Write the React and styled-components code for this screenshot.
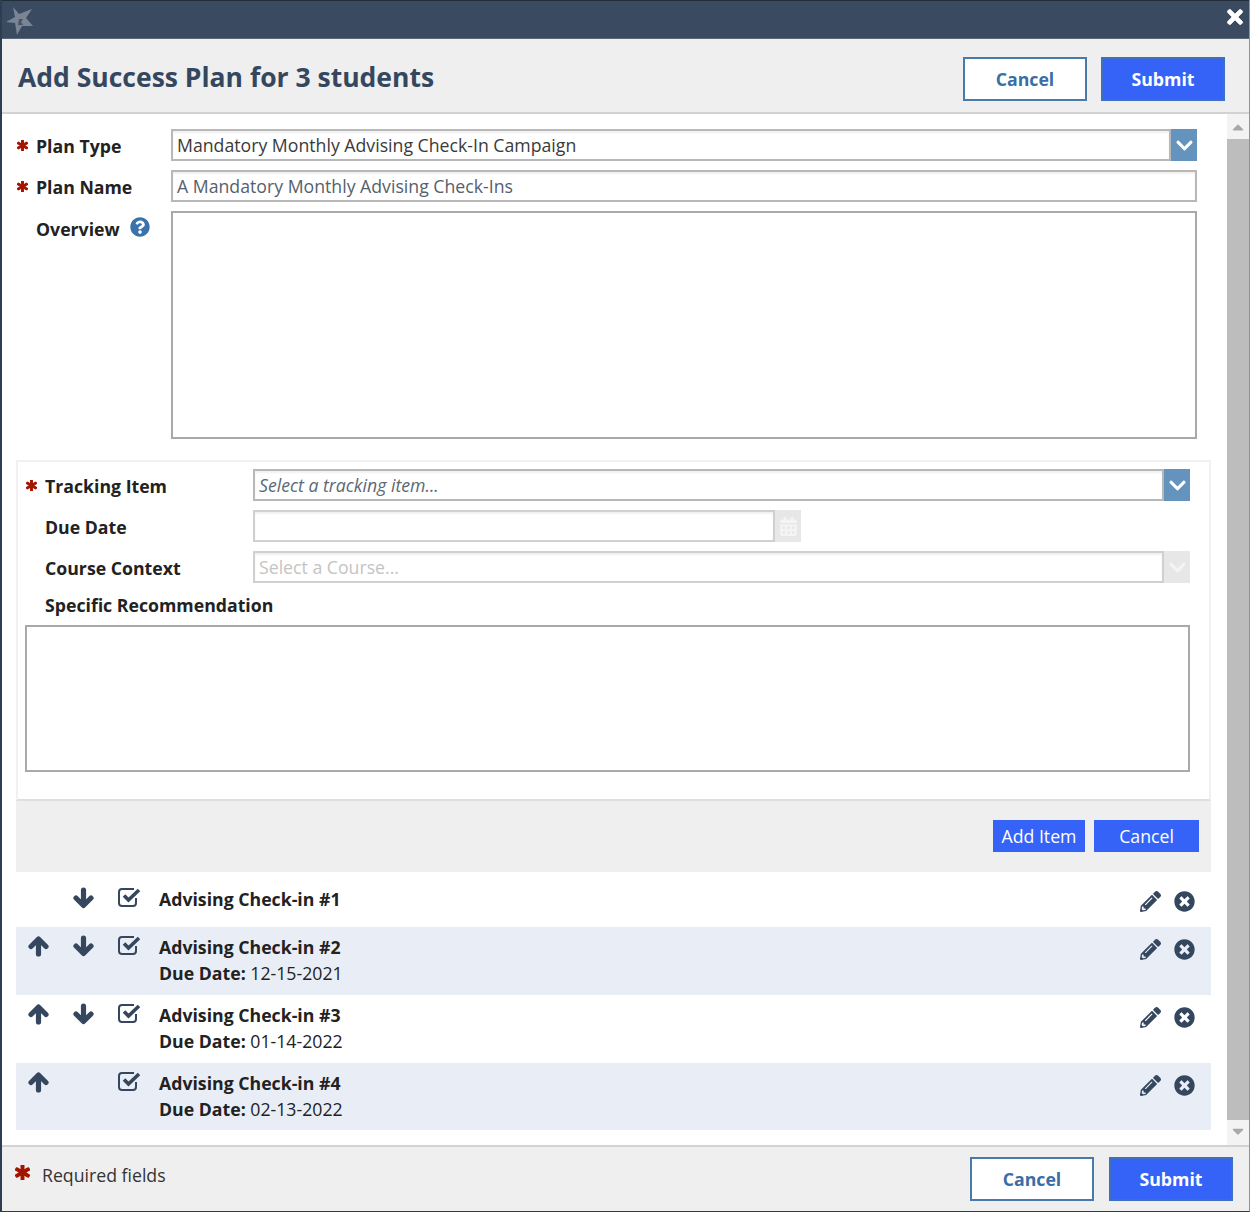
import React from 'react';
import styled, { createGlobalStyle } from 'styled-components';
import {
  FaPencilAlt,
  FaTimesCircle,
  FaChevronDown,
  FaQuestionCircle,
  FaTimes,
  FaAsterisk,
  FaCalendarAlt,
  FaCaretUp,
  FaCaretDown,
} from 'react-icons/fa';

const GlobalStyle = createGlobalStyle`
  html, body {
    margin: 0;
    padding: 0;
    background: #fff;
  }
  * {
    box-sizing: border-box;
  }
`;

const Dialog = styled.div`
  width: 1250px;
  height: 1212px;
  display: flex;
  flex-direction: column;
  overflow: hidden;
  border-left: 2px solid #2f3d50;
  border-right: 1px solid #8a93a0;
  border-bottom: 1px solid #2f3d50;
  font-family: 'Open Sans', sans-serif;
  font-size: 17.7px;
  color: #222;
`;

const TitleBar = styled.div`
  height: 39px;
  flex: none;
  margin: 0 -1px 0 -2px;
  padding: 5px 4px 0 5px;
  display: flex;
  justify-content: space-between;
  align-items: flex-start;
  background: #3a4a60;
  border-top: 1px solid #222c3a;
  border-bottom: 1px solid #5b6878;
`;

const CloseIcon = styled(FaTimes)`
  color: #fff;
  font-size: 22px;
  margin-top: 0;
  stroke: currentColor;
  stroke-width: 20px;
`;

const Header = styled.div`
  height: 75px;
  flex: none;
  padding: 6px 24px 0 16px;
  display: flex;
  justify-content: space-between;
  align-items: center;
  background: #efefef;
  border-bottom: 2px solid #d2d2d2;
`;

const Title = styled.h1`
  margin: 0 0 4px;
  font-size: 26.5px;
  font-weight: 700;
  color: #35475f;
`;

const Actions = styled.div`
  display: flex;
  gap: ${({ $gap }) => $gap}px;
`;

const OutlineButton = styled.button`
  width: 124px;
  height: 44px;
  padding: 0;
  background: #fff;
  border: 2px solid #4a7aaa;
  color: #3a6ea5;
  font-family: inherit;
  font-size: 17.7px;
  font-weight: 700;
`;

const SolidButton = styled(OutlineButton)`
  background: #3563f8;
  border-color: #3f6fc0;
  color: #fff;
`;

const Body = styled.div`
  flex: 1;
  min-height: 0;
  display: flex;
`;

const Content = styled.div`
  flex: 1;
  min-width: 0;
  padding: 15px 16px 0 14px;
`;

const Scrollbar = styled.div`
  width: 22px;
  flex: none;
  display: flex;
  flex-direction: column;
  background: #f3f3f3;
  color: #a8a8a8;
`;

const ScrollArrow = styled.div`
  height: 25px;
  flex: none;
  padding-bottom: ${({ $bottom }) => ($bottom ? 4 : 0)}px;
  display: flex;
  align-items: center;
  justify-content: center;
  font-size: 18px;
`;

const ScrollThumb = styled.div`
  flex: 1;
  background: #bdbdbd;
`;

const TopForm = styled.div`
  display: flex;
  flex-direction: column;
  gap: 9px;
  padding-right: 14px;
`;

const FieldRow = styled.div`
  display: grid;
  grid-template-columns: ${({ $labelWidth }) => $labelWidth}px 1fr;
  align-items: ${({ $top }) => ($top ? 'flex-start' : 'center')};
`;

const Label = styled.label`
  display: flex;
  align-items: center;
  height: 32px;
  font-weight: 700;
  color: #222;
  padding-top: 1px;
`;

const OverviewLabel = styled(Label)`
  padding-top: 3px;
`;

const StarSlot = styled.span`
  width: 20px;
  flex: none;
  display: flex;
  align-items: center;
  color: #a31500;
  font-size: 11px;
  padding-left: 1px;

  svg {
    stroke: currentColor;
    stroke-width: 50px;
  }
`;

const HelpIcon = styled(FaQuestionCircle)`
  color: #3a72ac;
  font-size: 20px;
  margin: -4px 0 0 10px;
`;

const Input = styled.div`
  flex: 1;
  min-width: 0;
  height: 32px;
  padding: 0 4px;
  display: flex;
  align-items: center;
  background: #fff;
  border: 2px solid ${({ $disabled }) => ($disabled ? '#d0d0d0' : '#b8b8b8')};
  box-shadow: inset 0 2px 2px #f0f0f0;
  white-space: nowrap;
  color: ${({ $muted }) => ($muted ? '#55606e' : '#3a3a3a')};
`;

const Placeholder = styled.span`
  font-style: italic;
  color: #5b6878;
`;

const DisabledText = styled.span`
  color: #c4c4c4;
`;

const TextArea = styled.div`
  height: ${({ $height }) => $height}px;
  background: #fff;
  border: 2px solid #a9a9a9;
`;

const Combo = styled.div`
  display: flex;
  width: ${({ $width }) => ($width ? `${$width}px` : 'auto')};
`;

const ComboButton = styled.div`
  width: 26px;
  height: 32px;
  flex: none;
  display: flex;
  align-items: center;
  justify-content: center;
  font-size: 19px;
  color: ${({ $disabled }) => ($disabled ? '#f4f4f4' : '#fff')};
  background: ${({ $disabled }) => ($disabled ? '#e6e7e6' : '#6494be')};
`;

const Panel = styled.div`
  margin-top: 21px;
  padding: 7px 19px 27px 7px;
  border: 2px solid #f1f1f1;
  border-bottom: 2px solid #dedede;
  display: flex;
  flex-direction: column;
  gap: 9px;
`;

const WideLabel = styled(Label)`
  padding-left: 20px;
  padding-top: 3px;
  height: 24px;
  margin: -1px 0 1px;
`;

const PanelActions = styled.div`
  height: 71px;
  padding: 19px 12px 0 0;
  display: flex;
  justify-content: flex-end;
  gap: 9px;
  background: #efefef;
`;

const SmallButton = styled.button`
  width: ${({ $width }) => $width}px;
  height: 32px;
  padding: 0;
  border: none;
  background: #3563f8;
  color: #fff;
  font-family: inherit;
  font-size: 17.7px;
`;

const ItemRow = styled.div`
  height: ${({ $height }) => $height}px;
  padding: ${({ $top }) => $top}px 9px 0 0;
  display: grid;
  grid-template-columns: 45px 45px 47px 1fr 34px 35px;
  background: ${({ $shaded }) => ($shaded ? '#e9eef6' : '#fff')};
  color: #35475f;
`;

const IconCell = styled.div`
  display: flex;
  justify-content: center;
  padding-top: 3px;
`;

const ItemText = styled.div`
  padding: 2px 0 0 6px;
  color: #222;
  line-height: 26px;
`;

const ItemTitle = styled.div`
  font-weight: 700;
`;

const DueLabel = styled.b`
  font-weight: 700;
`;

const ActionIcon = styled(IconCell)`
  font-size: 21px;
  padding-top: 7px;
`;

const Footer = styled.div`
  height: 66px;
  flex: none;
  padding: 0 16px 0 13px;
  display: flex;
  justify-content: space-between;
  align-items: center;
  background: #efefef;
  border-top: 2px solid #d2d2d2;
`;

const Required = styled.div`
  display: flex;
  align-items: center;
  gap: 12px;
  margin-bottom: 9px;
  color: #333;
`;

const RequiredStar = styled(FaAsterisk)`
  color: #a31500;
  font-size: 15px;
  margin-top: -5px;
  stroke: currentColor;
  stroke-width: 50px;
`;

const StarLogo = () => (
  <svg width="30" height="30" viewBox="0 0 30 30">
    <path fill="#7a8593" d="M8 1 L14 8 L27 3 L21 12 L28 20 L17 20 L12 29 L10 17 L1 16 L10 11 Z" />
    <path fill="#465569" d="M14 13 L18 13 L16 16 L18 19 L13 19 Z" />
  </svg>
);

const ArrowDown = () => (
  <svg width="21" height="22" viewBox="0 0 21 22" fill="none" stroke="currentColor" strokeWidth="5.2" strokeLinecap="round" strokeLinejoin="round">
    <path d="M10.5 3v15M3 11l7.5 7.5L18 11" />
  </svg>
);

const ArrowUp = () => (
  <svg width="21" height="22" viewBox="0 0 21 22" fill="none" stroke="currentColor" strokeWidth="5.2" strokeLinecap="round" strokeLinejoin="round">
    <path d="M10.5 19V4M3 11.5L10.5 4 18 11.5" />
  </svg>
);

const CheckBox = () => (
  <svg width="23" height="20" viewBox="0 0 23 20" fill="none" stroke="currentColor">
    <path strokeWidth="2" d="M18 11v5a3 3 0 0 1-3 3H4a3 3 0 0 1-3-3V5a3 3 0 0 1 3-3h12" />
    <path strokeWidth="3.6" d="M6 8.5l4.5 4.5L21 3" />
  </svg>
);

const RequiredMark = () => (
  <StarSlot>
    <FaAsterisk />
  </StarSlot>
);

const items = [
  { id: 1, title: 'Advising Check-in #1', up: false, down: true, height: 55, top: 12 },
  { id: 2, title: 'Advising Check-in #2', due: '12-15-2021', up: true, down: true, height: 68, top: 5, shaded: true },
  { id: 3, title: 'Advising Check-in #3', due: '01-14-2022', up: true, down: true, height: 68, top: 5 },
  { id: 4, title: 'Advising Check-in #4', due: '02-13-2022', up: true, down: false, height: 67, top: 5, shaded: true },
];

const App = () => (
  <>
    <GlobalStyle />
    <Dialog>
      <TitleBar>
        <StarLogo />
        <CloseIcon />
      </TitleBar>
      <Header>
        <Title>Add Success Plan for 3 students</Title>
        <Actions $gap={14}>
          <OutlineButton>Cancel</OutlineButton>
          <SolidButton>Submit</SolidButton>
        </Actions>
      </Header>
      <Body>
        <Content>
          <TopForm>
            <FieldRow $labelWidth={155}>
              <Label><RequiredMark />Plan Type</Label>
              <Combo>
                <Input>Mandatory Monthly Advising Check-In Campaign</Input>
                <ComboButton><FaChevronDown /></ComboButton>
              </Combo>
            </FieldRow>
            <FieldRow $labelWidth={155}>
              <Label><RequiredMark />Plan Name</Label>
              <Input $muted>A Mandatory Monthly Advising Check-Ins</Input>
            </FieldRow>
            <FieldRow $labelWidth={155} $top>
              <OverviewLabel>
                <StarSlot />
                Overview
                <HelpIcon />
              </OverviewLabel>
              <TextArea $height={228} />
            </FieldRow>
          </TopForm>
          <Panel>
            <FieldRow $labelWidth={228}>
              <Label><RequiredMark />Tracking Item</Label>
              <Combo>
                <Input><Placeholder>Select a tracking item...</Placeholder></Input>
                <ComboButton><FaChevronDown /></ComboButton>
              </Combo>
            </FieldRow>
            <FieldRow $labelWidth={228}>
              <Label><StarSlot />Due Date</Label>
              <Combo $width={548}>
                <Input $disabled />
                <ComboButton $disabled><FaCalendarAlt /></ComboButton>
              </Combo>
            </FieldRow>
            <FieldRow $labelWidth={228}>
              <Label><StarSlot />Course Context</Label>
              <Combo>
                <Input $disabled><DisabledText>Select a Course...</DisabledText></Input>
                <ComboButton $disabled><FaChevronDown /></ComboButton>
              </Combo>
            </FieldRow>
            <WideLabel>Specific Recommendation</WideLabel>
            <TextArea $height={147} />
          </Panel>
          <PanelActions>
            <SmallButton $width={92}>Add Item</SmallButton>
            <SmallButton $width={105}>Cancel</SmallButton>
          </PanelActions>
          {items.map((item) => (
            <ItemRow key={item.id} $height={item.height} $top={item.top} $shaded={item.shaded}>
              <IconCell>{item.up && <ArrowUp />}</IconCell>
              <IconCell>{item.down && <ArrowDown />}</IconCell>
              <IconCell><CheckBox /></IconCell>
              <ItemText>
                <ItemTitle>{item.title}</ItemTitle>
                {item.due && (
                  <div><DueLabel>Due Date:</DueLabel> {item.due}</div>
                )}
              </ItemText>
              <ActionIcon><FaPencilAlt /></ActionIcon>
              <ActionIcon><FaTimesCircle /></ActionIcon>
            </ItemRow>
          ))}
        </Content>
        <Scrollbar>
          <ScrollArrow><FaCaretUp /></ScrollArrow>
          <ScrollThumb />
          <ScrollArrow $bottom><FaCaretDown /></ScrollArrow>
        </Scrollbar>
      </Body>
      <Footer>
        <Required>
          <RequiredStar />
          Required fields
        </Required>
        <Actions $gap={15}>
          <OutlineButton>Cancel</OutlineButton>
          <SolidButton>Submit</SolidButton>
        </Actions>
      </Footer>
    </Dialog>
  </>
);

export default App;
